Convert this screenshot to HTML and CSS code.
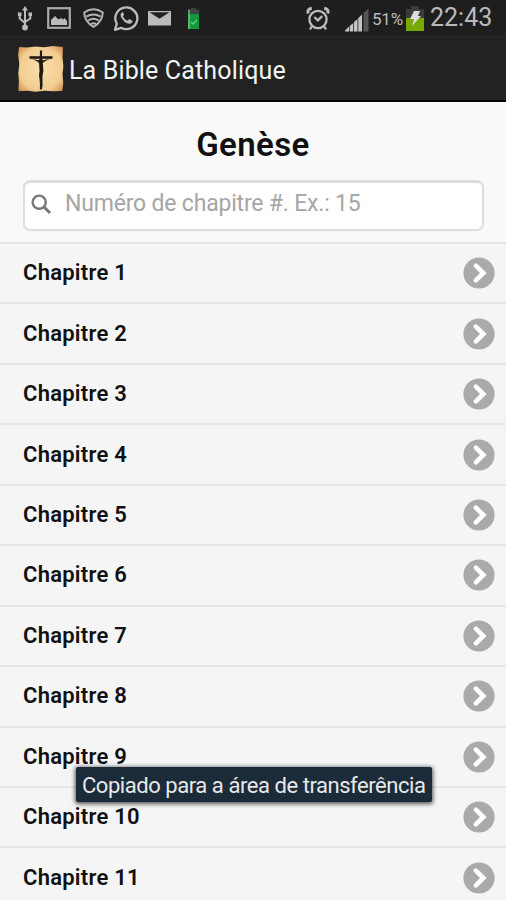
FILE: index.html
```html
<!DOCTYPE html>
<html lang="fr">
<head>
<meta charset="utf-8">
<title>La Bible Catholique</title>
<link rel="stylesheet" href="styles.css">
</head>
<body>
<svg width="0" height="0" class="defs">
  <symbol id="go" viewBox="0 0 32 32"><circle cx="16" cy="16" r="15.6" fill="#aaa"/><path d="M12.9 8.7 20.3 16l-7.4 7.3" fill="none" stroke="#fff" stroke-width="4.6" stroke-linecap="round"/></symbol>
</svg>
<header class="status">
  <div class="left">
    <svg class="usb" width="16" height="26" viewBox="0 0 16 26" fill="none" stroke="#bbb" stroke-width="2"><path d="M8 4v18M2.7 9v4.5L8 18M13.3 9v4.5L8 17"/><path d="M8 1 11 5.5H5z" fill="#bbb" stroke="none"/><circle cx="8" cy="22.5" r="2.9" fill="#bbb" stroke="none"/><path d="M.9 7.5h3.6V11H.9zM11.5 7.5H15V11h-3.5z" fill="#bbb" stroke="none"/></svg>
    <svg class="image" width="24" height="22" viewBox="0 0 24 22"><rect x="1.2" y="1.2" width="21.6" height="19.6" fill="none" stroke="#aaa" stroke-width="2.2"/><path d="M4 18v-5l4-4 3.5 3.5L14 11l2 1.5 1.5-1.5 2.5 3v4z" fill="#bbb"/></svg>
    <svg class="wifi" width="21" height="21" viewBox="0 0 21 21" fill="none" stroke="#b4b4b4" stroke-width="2" stroke-linejoin="round"><path d="M1.2 4.5Q10.5-1.8 19.8 4.5 19.5 13.5 10.5 19 1.5 13.5 1.2 4.5z"/><path d="M3.4 8.7q7.1-4.6 14.2 0M5.2 12.5q5.3-3.4 10.6 0M8 16q2.5-1.4 5 0"/></svg>
    <svg class="phone" width="26" height="27" viewBox="0 0 26 27"><path d="M2 24.8 3.8 18.7A11 10.8 0 1 1 8.1 22.8z" fill="none" stroke="#bbb" stroke-width="2.3" stroke-linejoin="round"/><path d="M9.2 7.2c-2 1.1-2 3.4-.8 5.5 2 3.5 4.7 5.7 7.8 6 1.8.1 3.3-1 3.4-2.8l-3.3-1.9-1.6 1.7c-2.4-.9-3.8-2.3-4.8-4.4l1.2-1.5-1-2.6z" fill="#bbb"/></svg>
    <svg class="mail" width="23" height="16" viewBox="0 0 23 16"><path d="M0 1h23v14.500H0z" fill="#bbb"/><path d="M1.500 2.200h20L11.500 8.800z" fill="#222"/></svg>
    <svg class="cell" width="13" height="23" viewBox="0 0 13 23"><path d="M4 1h5v1.500h3V8H1V2.500h3z" fill="#39463f"/><path d="M1 7h11v15H1z" fill="#14963a"/><path d="M1 2.500h2V22H1z" fill="#8ac39a" opacity=".6"/><path d="m4 15 2 2 4-4" fill="none" stroke="#5fd080" stroke-width="1.300"/></svg>
  </div>
  <div class="right">
    <svg class="alarm" width="24" height="25" viewBox="0 0 24 25" fill="none" stroke="#bbb" stroke-width="2.3"><circle cx="12" cy="13.500" r="8.600"/><path d="m8.300 11 3.500 3.400 4.400-4.200M6 20l-2 3.500M18 20l2 3.500"/><path d="M2.200 7.500Q1 3 5.800 2.200M21.800 7.500Q23 3 18.200 2.200" stroke-width="3"/></svg>
    <svg class="signal" width="24" height="24" viewBox="0 0 24 24"><path d="M0 23.500v-1l4-4v5zM4.700 23.500V18l3.500-3v8.500zM9 23.500V14l3.500-3v12.500zM13.300 23.500V10l3.700-3.500v17z" fill="#c4c4c4"/><path d="M18.500 23.500V5L23.500.5v23z" fill="#555"/></svg>
    <span class="percent">51%</span>
    <svg class="battery" width="18" height="25" viewBox="0 0 18 25"><path d="M5 0h8v3h5v22H0V3h5z" fill="#3b3b3b"/><path d="M0 12h18v13H0z" fill="#76a900"/><path d="M8 5h6l-2 5h3L6 20l2-7H4z" fill="#ddd"/></svg>
    <span class="clock">22:43</span>
  </div>
</header>
<div class="appbar">
  <svg width="46" height="46" viewBox="0 0 46 46">
    <defs><radialGradient id="paper" r=".72"><stop offset="0" stop-color="#f9dfae"/><stop offset=".65" stop-color="#f3cd92"/><stop offset=".88" stop-color="#d99a5b"/><stop offset="1" stop-color="#985025"/></radialGradient></defs>
    <path d="M1 1l8 .5 8-1 9 .8L35 0l10 1-.5 10 .9 9-.9 8 .8 9-1 8-9 .3-9-.6-9 1-8-.9-9 .4.6-9L.3 27l1-9L.2 9z" fill="url(#paper)"/>
    <path d="M23 4.500v39" stroke="#211a13" stroke-width="2.200"/><path d="M11.500 11.500h23" stroke="#211a13" stroke-width="2.600"/><path d="M12 12.500q6 1.500 9 4.500l.6 8-.6 4 1.500 12h2l-.1-11 1-5-.6-8q3-3 9-4.500l-9 1.800a2.200 2.200 0 0 0-4.200 0z" fill="#211a13"/>
  </svg>
  <span class="apptitle">La Bible Catholique</span>
</div>
<main>
  <h1><span>Genèse</span></h1>
  <div class="search">
    <svg width="21" height="21" viewBox="0 0 21 21" fill="none" stroke="#777"><circle cx="8.200" cy="8.200" r="6.600" stroke-width="2.400"/><path d="m13 13 6 6" stroke-width="3"/></svg>
    <span class="hint">Numéro de chapitre #. Ex.: 15</span>
  </div>
  <ul>
    <li><span>Chapitre 1</span><svg><use href="#go"/></svg></li>
    <li><span>Chapitre 2</span><svg><use href="#go"/></svg></li>
    <li><span>Chapitre 3</span><svg><use href="#go"/></svg></li>
    <li><span>Chapitre 4</span><svg><use href="#go"/></svg></li>
    <li><span>Chapitre 5</span><svg><use href="#go"/></svg></li>
    <li><span>Chapitre 6</span><svg><use href="#go"/></svg></li>
    <li><span>Chapitre 7</span><svg><use href="#go"/></svg></li>
    <li><span>Chapitre 8</span><svg><use href="#go"/></svg></li>
    <li><span>Chapitre 9</span><svg><use href="#go"/></svg></li>
    <li><span>Chapitre 10</span><svg><use href="#go"/></svg></li>
    <li><span>Chapitre 11</span><svg><use href="#go"/></svg></li>
  </ul>
</main>
<div class="toast"><span>Copiado para a área de transferência</span></div>
</body>
</html>
```
FILE: styles.css
```css
* { box-sizing: border-box; }
body { margin: 0; width: 506px; height: 900px; overflow: hidden; position: relative; background: #f9f9f9; font-family: Roboto, sans-serif; color: #111; }
svg { display: block; flex: none; }
.defs { position: absolute; }
.status { height: 37px; background: #1e1e1e; display: flex; justify-content: space-between; color: #bbb; border-bottom: 1px solid #2a2a2a; }
.left, .right { display: flex; align-items: flex-start; }
.left { padding-left: 17px; }
.usb { margin-top: 5px; }
.image { margin: 7px 0 0 14px; }
.wifi { margin: 8px 0 0 12px; }
.phone { margin: 5px 0 0 9px; }
.mail { margin: 10px 0 0 9px; }
.cell { margin: 7px 0 0 16px; }
.right { padding-right: 13px; }
.alarm { margin: 6px 15px 0 0; }
.signal { margin: 8px 3px 0 0; }
.percent { font-size: 17px; line-height: 20px; margin-top: 9px; width: 34px; letter-spacing: -.2px; }
.battery { margin-top: 6px; }
.clock { font-size: 25px; line-height: 30px; margin: 3px 0 0 6px; width: 63px; white-space: nowrap; }
.appbar { height: 65px; background: #222; display: flex; align-items: center; padding: 2px 0 1px 18px; border-bottom: 2px solid #050505; color: #f3f3f3; }
.apptitle { font-size: 25px; letter-spacing: .15px; margin: 2px 0 0 5px; }
main { height: 798px; overflow: hidden; }
h1 { margin: 0; height: 78px; padding-top: 22px; text-align: center; font-size: 33px; line-height: 42px; font-weight: 600; letter-spacing: .4px; }
.search { margin: 0 22px 0 23px; height: 51px; border: 2px solid #ddd; border-top-width: 3px; border-radius: 7px; background: #fff; display: flex; align-items: center; padding-left: 6px; }
.search svg { margin-top: -3px; }
.hint { font-size: 23px; letter-spacing: -.19px; color: #a5a5a5; margin: -5px 0 0 13px; white-space: nowrap; }
ul { list-style: none; margin: 11px 0 0; padding: 0; background: #f5f5f5; }
li { height: 60.45px; border-top: 2px solid #e6e6e6; display: flex; align-items: center; justify-content: space-between; padding: 0 11px 0 23px; font-size: 22px; font-weight: 600; letter-spacing: .25px; }
li span { margin-top: -1px; }
li svg { width: 32px; height: 32px; }
.toast { position: absolute; left: 76px; top: 767px; width: 356px; height: 35px; background: #1c2b3a; border-radius: 2px; box-shadow: 0 1px 4px 1px rgba(0,0,0,.65); color: #e8e8e8; font-size: 22px; letter-spacing: -.45px; line-height: 37px; padding-left: 6px; white-space: nowrap; }
```
